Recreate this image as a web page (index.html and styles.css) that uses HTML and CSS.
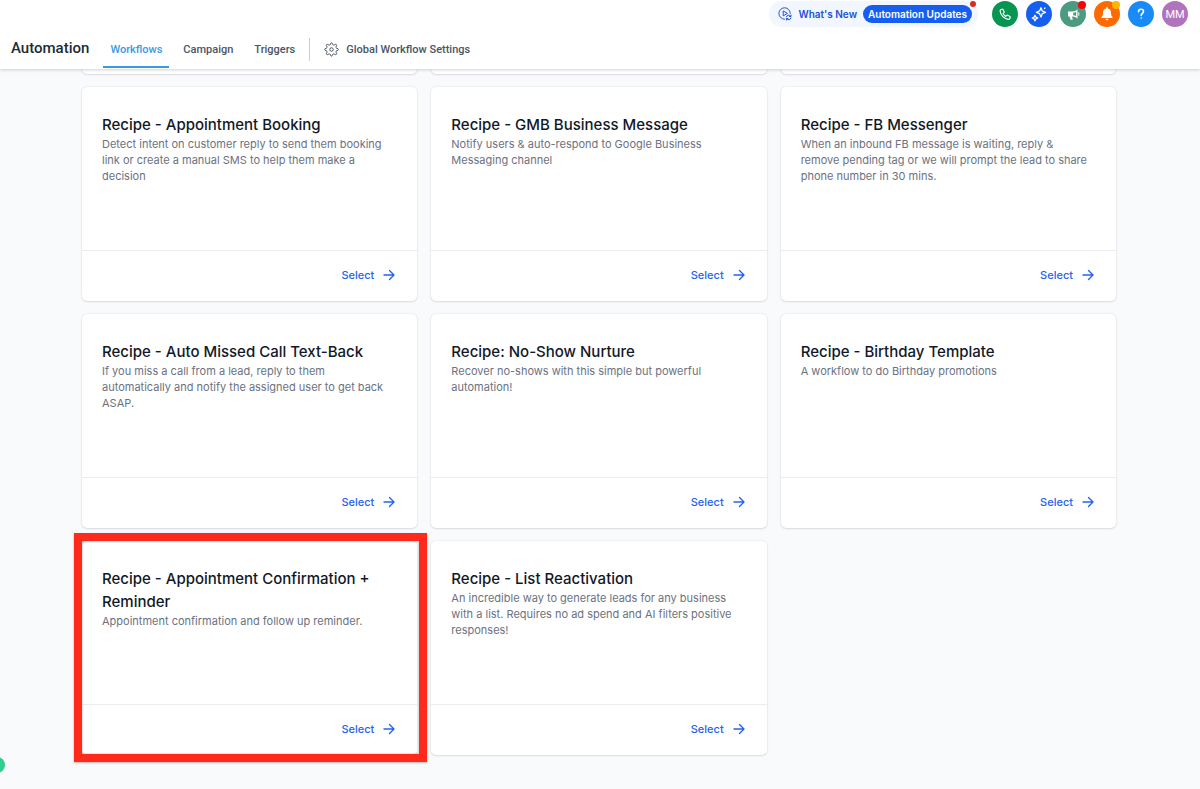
FILE: index.html
```html
<!DOCTYPE html>
<html lang="en">
<head>
    <meta charset="utf-8">
    <meta name="viewport" content="width=device-width, initial-scale=1">
    <title>Automation - Workflows</title>
    <link rel="stylesheet" href="styles.css">
</head>

<body>
    <svg class="sprite" aria-hidden="true">
        <symbol id="arrow" viewBox="0 0 12 12">
            <path d="M1 6h10M6.500 1.500L11 6l-4.500 4.500" fill="none" stroke="currentColor" stroke-width="1.400" stroke-linecap="round" stroke-linejoin="round"/>
        </symbol>
    </svg>

    <header class="header">
        <div class="topbar">
            <div class="news">
                <svg class="news-icon" viewBox="0 0 14 14" fill="none" stroke="currentColor" stroke-linecap="round" stroke-linejoin="round">
                    <path d="M12.300 6.300A5.700 5.700 0 1 0 6.500 12.200"/>
                    <path d="M5.200 4.300v4.600l3.900-2.300z"/>
                    <path d="M8.500 9.800a2.300 2.300 0 0 1 4-.8M13 8v1.500h-1.500M12.900 11a2.300 2.300 0 0 1-4 .9M8.400 13v-1.500h1.500"/>
                </svg>
                <a class="news-link" href="#">What's New</a>
                <a class="news-pill" href="#">Automation Updates</a>
                <span class="news-dot"></span>
            </div>
            <button class="round green" type="button" aria-label="Phone">
                <svg viewBox="0 0 26 26" fill="none" stroke="#fff" stroke-width="1.200" stroke-linejoin="round">
                    <path d="M8.700 8.800L10 8.200c.5-.2 1 0 1.200.5l.9 2c.2.5.1.900-.3 1.200l-.8.7c.6 1.300 1.500 2.200 2.800 2.800l.8-.9c.3-.3.700-.4 1.200-.2l1.900.9c.5.2.7.7.5 1.200l-.5 1.300c-.2.500-.7.800-1.200.7-4.300-.4-7.900-4-8.400-8.400 0-.5.200-1 .6-1.200z"/>
                </svg>
            </button>
            <button class="round blue" type="button" aria-label="Assistant">
                <svg viewBox="0 0 26 26" fill="none" stroke="#fff" stroke-width="1.300" stroke-linejoin="round" stroke-linecap="round">
                    <path d="M15 6.800l1.200 3.100 3.300 1.400-3.300 1.400-1.200 3.300-1.400-3.300-3.200-1.400 3.200-1.400z"/>
                    <path d="M9 14.300l.9 1.900 1.900.8-1.900.9-.9 1.900-.9-1.900-1.900-.9 1.900-.8z"/>
                    <path d="M18.500 7.500l.5-.5"/>
                </svg>
            </button>
            <button class="round teal" type="button" aria-label="Announcements">
                <svg viewBox="0 0 26 26">
                    <path d="M8 10.500h4.500c2 0 3.500-.8 5-2.200v9.400c-1.500-1.400-3-2.200-5-2.200H12l.8 3.200h-2.300l-1-3.200H8z" fill="#fff"/>
                    <path d="M13.200 11.800c1.100 0 2-.3 2.900-.8v4c-.9-.5-1.800-.8-2.900-.8z" fill="#4a9b81"/>
                    <path d="M18.800 11.800v2.500" stroke="#fff" stroke-linecap="round"/>
                </svg>
                <span class="badge red"></span>
            </button>
            <button class="round orange" type="button" aria-label="Notifications">
                <svg viewBox="0 0 26 26" fill="#fff">
                    <path d="M13 6.300c.6 0 1 .4 1 1v.3c1.900.5 3 2.100 3 4.100 0 2.300.5 3.200 1.400 4.100.5.500.2 1.200-.5 1.200H8.100c-.7 0-1-.7-.5-1.200.9-.9 1.400-1.800 1.400-4.100 0-2 1.100-3.600 3-4.100v-.3c0-.6.4-1 1-1z"/>
                    <path d="M11.500 17.800h3a1.500 1.500 0 0 1-3 0z"/>
                </svg>
                <span class="badge yellow"></span>
            </button>
            <button class="round sky" type="button" aria-label="Help">
                <svg viewBox="0 0 26 26" fill="none" stroke="#fff" stroke-width="1.600" stroke-linecap="round">
                    <path d="M10.500 10.800c0-1.500 1-2.500 2.500-2.500s2.500.9 2.500 2.200c0 1.700-2.300 1.900-2.300 3.700v.3M13.200 17v.1"/>
                </svg>
            </button>
            <button class="round avatar" type="button">MM</button>
        </div>

        <nav class="nav">
            <h1 class="nav-title">Automation</h1>
            <a class="tab active" href="#">Workflows</a>
            <a class="tab" href="#">Campaign</a>
            <a class="tab" href="#">Triggers</a>
            <span class="divider"></span>
            <a class="tab settings" href="#">
                <svg class="gear" viewBox="-1 0 26 26" fill="none" stroke="currentColor" stroke-width="1.700" stroke-linejoin="round">
                    <path d="M10 4.500Q10.300 1.500 12 1.500T14 4.500Q15 5.600 16.500 5.300Q19 3.200 20.400 4.600T19.700 8.500Q19.500 10.200 21 11Q24 11.300 24 13T21 15Q19.500 15.800 19.700 17.500Q21.800 20 20.400 21.400T16.500 20.700Q15 20.400 14 21.500Q13.700 24.500 12 24.500T10 21.500Q9 20.400 7.500 20.700Q5 22.800 3.600 21.400T4.300 17.500Q4.500 15.800 3 15Q0 14.700 0 13T3 11Q4.500 10.200 4.300 8.500Q2.200 6 3.600 4.600T7.500 5.300Q9 5.600 10 4.500z"/>
                    <circle cx="12" cy="13" r="3"/>
                </svg>
                Global Workflow Settings
            </a>
        </nav>
    </header>

    <main class="recipes">
        <!-- end of the row scrolled under the header -->
        <div class="card-end"></div>
        <div class="card-end"></div>
        <div class="card-end"></div>

        <article class="card">
            <div class="card-body">
                <h2>Recipe - Appointment Booking</h2>
                <p>Detect intent on customer reply to send them booking link or create a manual SMS to help them make a decision</p>
            </div>
            <div class="card-footer">
                <button class="select" type="button">Select <svg><use href="#arrow"/></svg></button>
            </div>
        </article>

        <article class="card">
            <div class="card-body">
                <h2>Recipe - GMB Business Message</h2>
                <p>Notify users &amp; auto-respond to Google Business Messaging channel</p>
            </div>
            <div class="card-footer">
                <button class="select" type="button">Select <svg><use href="#arrow"/></svg></button>
            </div>
        </article>

        <article class="card">
            <div class="card-body">
                <h2>Recipe - FB Messenger</h2>
                <p>When an inbound FB message is waiting, reply &amp; remove pending tag or we will prompt the lead to share phone number in 30 mins.</p>
            </div>
            <div class="card-footer">
                <button class="select" type="button">Select <svg><use href="#arrow"/></svg></button>
            </div>
        </article>

        <article class="card">
            <div class="card-body">
                <h2>Recipe - Auto Missed Call Text-Back</h2>
                <p>If you miss a call from a lead, reply to them automatically and notify the assigned user to get back ASAP.</p>
            </div>
            <div class="card-footer">
                <button class="select" type="button">Select <svg><use href="#arrow"/></svg></button>
            </div>
        </article>

        <article class="card">
            <div class="card-body">
                <h2>Recipe: No-Show Nurture</h2>
                <p>Recover no-shows with this simple but powerful automation!</p>
            </div>
            <div class="card-footer">
                <button class="select" type="button">Select <svg><use href="#arrow"/></svg></button>
            </div>
        </article>

        <article class="card">
            <div class="card-body">
                <h2>Recipe - Birthday Template</h2>
                <p>A workflow to do Birthday promotions</p>
            </div>
            <div class="card-footer">
                <button class="select" type="button">Select <svg><use href="#arrow"/></svg></button>
            </div>
        </article>

        <article class="card highlight">
            <div class="card-body">
                <h2>Recipe - Appointment Confirmation + Reminder</h2>
                <p>Appointment confirmation and follow up reminder.</p>
            </div>
            <div class="card-footer">
                <button class="select" type="button">Select <svg><use href="#arrow"/></svg></button>
            </div>
        </article>

        <article class="card">
            <div class="card-body">
                <h2>Recipe - List Reactivation</h2>
                <p>An incredible way to generate leads for any business with a list. Requires no ad spend and AI filters positive responses!</p>
            </div>
            <div class="card-footer">
                <button class="select" type="button">Select <svg><use href="#arrow"/></svg></button>
            </div>
        </article>
    </main>

    <span class="edge-dot"></span>
</body>
</html>
```
FILE: styles.css
```css
* {
    box-sizing: border-box;
}
body {
    margin: 0;
    background-color: #f9fafc;
    font-family: Inter, sans-serif;
    color: #111827;
}
a {
    text-decoration: none;
}
button {
    font-family: inherit;
    border: none;
    padding: 0;
    cursor: pointer;
}
.sprite {
    position: absolute;
    width: 0;
    height: 0;
}

/* Header */
.header {
    position: relative;
    height: 69px;
    background-color: white;
    box-shadow: 0 1px 3px rgba(0, 0, 0, 0.18);
    font-family: Roboto, sans-serif;
}
.topbar {
    display: flex;
    justify-content: flex-end;
    align-items: center;
    gap: 8px;
    height: 28px;
    padding-right: 12px;
}
.news {
    position: relative;
    display: flex;
    align-items: center;
    height: 26px;
    margin-right: 6px;
    padding: 0 6px 0 9px;
    border-radius: 13px;
    background-color: #f2f6ff;
    font-family: Inter, sans-serif;
    font-size: 10px;
    font-weight: 600;
}
.news-icon {
    width: 14px;
    height: 14px;
    margin-right: 6px;
    color: #1d4fd7;
}
.news-link {
    margin-right: 6px;
    color: #1a50d8;
}
.news-pill {
    height: 18px;
    padding: 0 5px;
    border-radius: 9px;
    background-color: #155eef;
    color: white;
    line-height: 18px;
}
.news-dot {
    position: absolute;
    top: 0;
    right: 2px;
    width: 6px;
    height: 6px;
    border-radius: 50%;
    background-color: #d92d20;
}
.round {
    position: relative;
    width: 26px;
    height: 26px;
    border-radius: 50%;
    color: white;
}
.round svg {
    display: block;
    width: 26px;
    height: 26px;
}
.green { background-color: #089552; }
.blue { background-color: #155eef; }
.teal { background-color: #4a9b81; }
.orange { background-color: #ff6a00; }
.sky { background-color: #188bf6; }
.avatar {
    background-color: #b273bd;
    font-size: 11px;
}
.badge {
    position: absolute;
    top: 0;
    right: 0;
    width: 8px;
    height: 8px;
    border-radius: 50%;
}
.red { background-color: #ff0000; }
.yellow { background-color: #ffb400; }

.nav {
    display: flex;
    align-items: center;
    height: 40px;
    padding-left: 11px;
}
.nav-title {
    margin: 0 14px 0 0;
    font-size: 15px;
    font-weight: 500;
    color: #202a37;
}
.tab {
    display: flex;
    align-items: center;
    height: 40px;
    padding: 4px 7px 0;
    margin-right: 7px;
    border-bottom: 2px solid transparent;
    font-size: 11px;
    font-weight: 500;
    color: #4b5563;
}
.tab.active {
    border-bottom-color: #3a9ae0;
    color: #3a9ae0;
}
.divider {
    width: 1px;
    height: 23px;
    margin: 3px 7px 0 0;
    background-color: #c9ccd1;
}
.gear {
    width: 15px;
    height: 15px;
    margin-right: 7px;
}

/* Recipe cards */
.recipes {
    display: grid;
    grid-template-columns: repeat(3, 1fr);
    gap: 13px 14px;
    padding: 0 84px 34px 82px;
}
.card,
.card-end {
    background-color: white;
    border-radius: 5px;
    box-shadow: 0 0 2px rgba(16, 24, 40, 0.12), 0 1px 2px rgba(16, 24, 40, 0.1);
}
.card-end {
    height: 5px;
    border-radius: 0 0 5px 5px;
}
.card {
    position: relative;
    display: flex;
    flex-direction: column;
    min-height: 214px;
}
.card-body {
    flex: 1;
    padding: 26px 24px 16px 20px;
}
.card h2 {
    margin: 0;
    font-size: 15px;
    font-weight: 500;
    line-height: 23px;
}
.card p {
    margin: 0;
    font-size: 11px;
    line-height: 16px;
    color: #6b7280;
}
.card-footer {
    display: flex;
    justify-content: flex-end;
    align-items: center;
    height: 51px;
    padding: 0 22px 2px 0;
    border-top: 1px solid #eaecf0;
}
.select {
    display: flex;
    align-items: center;
    gap: 9px;
    background: none;
    font-size: 11px;
    font-weight: 500;
    color: #2563eb;
}
.select svg {
    width: 12px;
    height: 12px;
}
.highlight::after {
    content: "";
    position: absolute;
    inset: -8px -10px -7px -8px;
    border: 8px solid #ff2a1c;
    box-shadow: 0 1px 2px rgba(0, 0, 0, 0.3), inset 0 0 2px rgba(0, 0, 0, 0.4);
    pointer-events: none;
}
.edge-dot {
    position: fixed;
    left: -11px;
    bottom: 16px;
    width: 16px;
    height: 16px;
    border-radius: 50%;
    background-color: #33cc8f;
}
```
